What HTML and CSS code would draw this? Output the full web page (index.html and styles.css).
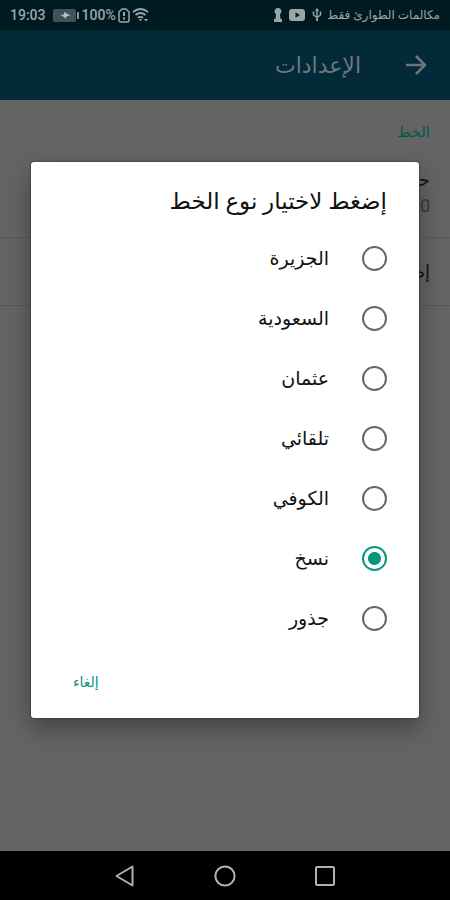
FILE: index.html
```html
<!DOCTYPE html>
<html lang="ar" dir="rtl">
<head>
<meta charset="utf-8">
<meta name="viewport" content="width=device-width, initial-scale=1">
<title>الإعدادات</title>
<link rel="stylesheet" href="styles.css">
</head>
<body>
<div class="status">
  <div class="status-group">
    <span class="carrier">مكالمات الطوارئ فقط</span>
    <svg width="10" height="14" viewBox="0 0 10 14" fill="none" stroke="currentColor" stroke-width="1.4"><path d="M5 1v12M1.500 4v3L5 9.500M8.500 4v3L5 9.500"/><path d="M5 0l2 3H3zM4 11h2v2H4zM.8 3.500h1.500v1.500H.8zM7.700 3.500h1.500v1.500H7.700z" fill="currentColor" stroke="none"/></svg>
    <svg class="video" width="16" height="12" viewBox="0 0 16 12"><path fill="currentColor" fill-rule="evenodd" d="M3 0h10q3 0 3 3v6q0 3-3 3H3q-3 0-3-3V3q0-3 3-3zM6.500 3.200v5.600L11 6z"/></svg>
    <svg width="8" height="14" viewBox="0 0 8 14"><path fill="currentColor" d="M4 0a3.300 3.300 0 0 1 2 6L6.500 11H8v3H0v-3h1.500L2 6A3.300 3.300 0 0 1 4 0z"/></svg>
  </div>
  <div class="status-group status-system" dir="ltr">
    <time class="clock">19:03</time>
    <svg width="27" height="13" viewBox="0 0 27 13"><rect width="23" height="13" rx="2" fill="#415258"/><path d="M24 3h2v7h-2z" fill="#87969a"/><path d="M7 6l4-.6V3l5 2.800 1 .7-4 1.200v2L9.500 7z" fill="#b5c0c3"/></svg>
    <span class="percent">100%</span>
    <svg class="sim" width="12" height="15" viewBox="0 0 12 15" fill="none" stroke="currentColor" stroke-width="1.500"><path d="M4 1h4l3 3v8q0 2-2 2H3q-2 0-2-2V4z"/><path d="M6 4v4M6 9.500v2" stroke-width="2"/></svg>
    <svg width="17" height="14" viewBox="0 0 17 14" fill="none" stroke="currentColor" stroke-width="1.700"><path d="M1 4q7.500-6 15 0M3.500 7q5-4 10 0M5.800 9.800q2.700-2 5.200 0"/><path d="M7 11h3l-1.500 2.500zM12 11h4l-2 2.500z" fill="currentColor" stroke="none"/></svg>
  </div>
</div>
<header class="appbar">
  <a class="back" href="#" aria-label="رجوع"><svg width="20" height="20" viewBox="0 0 20 20" fill="none" stroke="currentColor" stroke-width="2.500"><path d="M0 10h18M10 1l9 9-9 9"/></svg></a>
  <h1>الإعدادات</h1>
</header>
<main class="settings">
  <h2>الخط</h2>
  <div class="setting size"><span>حجم</span><span class="value">20</span></div>
  <div class="setting"><span>إضغط</span></div>
</main>
<nav class="navbar" dir="ltr">
  <button type="button" aria-label="رجوع"><svg width="22" height="22" viewBox="0 0 22 22"><path d="M18.500 1.500v19L2.500 11z"/></svg></button>
  <button type="button" aria-label="الرئيسية"><svg width="22" height="22" viewBox="0 0 22 22"><circle cx="11" cy="11" r="9.600"/></svg></button>
  <button type="button" aria-label="التطبيقات"><svg width="22" height="22" viewBox="0 0 22 22"><rect x="2" y="2" width="18" height="18" rx="1"/></svg></button>
</nav>
<div class="overlay">
  <form class="dialog" role="dialog" aria-labelledby="dialog-title">
    <h2 id="dialog-title">إضغط لاختيار نوع الخط</h2>
    <label><input type="radio" name="font"><span>الجزيرة</span></label>
    <label><input type="radio" name="font"><span>السعودية</span></label>
    <label><input type="radio" name="font"><span>عثمان</span></label>
    <label><input type="radio" name="font"><span>تلقائي</span></label>
    <label><input type="radio" name="font"><span>الكوفي</span></label>
    <label><input type="radio" name="font" checked><span>نسخ</span></label>
    <label><input type="radio" name="font"><span>جذور</span></label>
    <div class="actions"><button type="button">إلغاء</button></div>
  </form>
</div>
</body>
</html>
```
FILE: styles.css
```css
* { box-sizing: border-box; }
body {
  margin: 0;
  min-height: 100vh;
  display: flex;
  flex-direction: column;
  background: #646464;
  color: #111;
  font-family: Roboto, "DejaVu Sans", sans-serif;
}
h1, h2 { margin: 0; font-weight: 400; }
svg { display: block; flex: none; }
button { border: 0; padding: 0; background: none; font: inherit; color: inherit; }

.status {
  height: 30px;
  padding: 0 10px;
  display: flex;
  align-items: center;
  justify-content: space-between;
  background: #001a21;
  color: #9aa6a9;
}
.status-group { display: flex; align-items: center; gap: 5px; }
.status-system { gap: 2px; }
.carrier { font-size: 12px; white-space: nowrap; }
.clock { font-size: 14px; font-weight: 500; margin-right: 5px; }
.percent { font-size: 14px; font-weight: 500; }
.video { margin: 0 2px; }

.appbar {
  height: 70px;
  padding: 0 24px;
  display: flex;
  align-items: center;
  gap: 45px;
  background: #032a38;
  color: #6d777b;
}
.back { color: inherit; }
.appbar h1 { font-size: 22px; }

.settings { flex: 1; }
.settings h2 {
  padding: 20px 20px 0;
  font-size: 15px;
  line-height: 24px;
  color: #06574a;
}
.setting {
  height: 68px;
  padding: 0 20px;
  display: flex;
  flex-direction: column;
  justify-content: center;
  border-bottom: 1px solid #585858;
  font-size: 18px;
  line-height: 26px;
}
.size { height: 94px; padding-top: 4px; }
.value { color: #393939; }

.navbar {
  height: 49px;
  display: flex;
  align-items: center;
  justify-content: center;
  gap: 78px;
  background: #000;
}
.navbar svg { fill: none; stroke: #b0b0b0; stroke-width: 2; stroke-linejoin: round; }

.overlay {
  position: absolute;
  inset: 30px 31px 50px;
  display: grid;
  align-items: center;
}
.dialog {
  padding: 14px 32px 10px;
  border-radius: 3px;
  background: #fff;
  box-shadow: 0 0 2px #222, 0 10px 24px rgba(0, 0, 0, .35);
}
.dialog h2 { font-size: 23px; line-height: 52px; }
.dialog label {
  height: 60px;
  display: flex;
  align-items: center;
  gap: 33px;
  font-size: 19px;
}
.dialog input {
  appearance: none;
  width: 25px;
  height: 25px;
  margin: 0;
  border: 2px solid #666;
  border-radius: 50%;
}
.dialog input:checked {
  border-color: #079580;
  background: radial-gradient(circle, #079580 6px, transparent 7px);
}
.actions {
  height: 60px;
  padding: 8px 10px 0;
  display: flex;
  align-items: center;
  justify-content: flex-end;
  color: #079580;
  font-size: 14px;
}
```
